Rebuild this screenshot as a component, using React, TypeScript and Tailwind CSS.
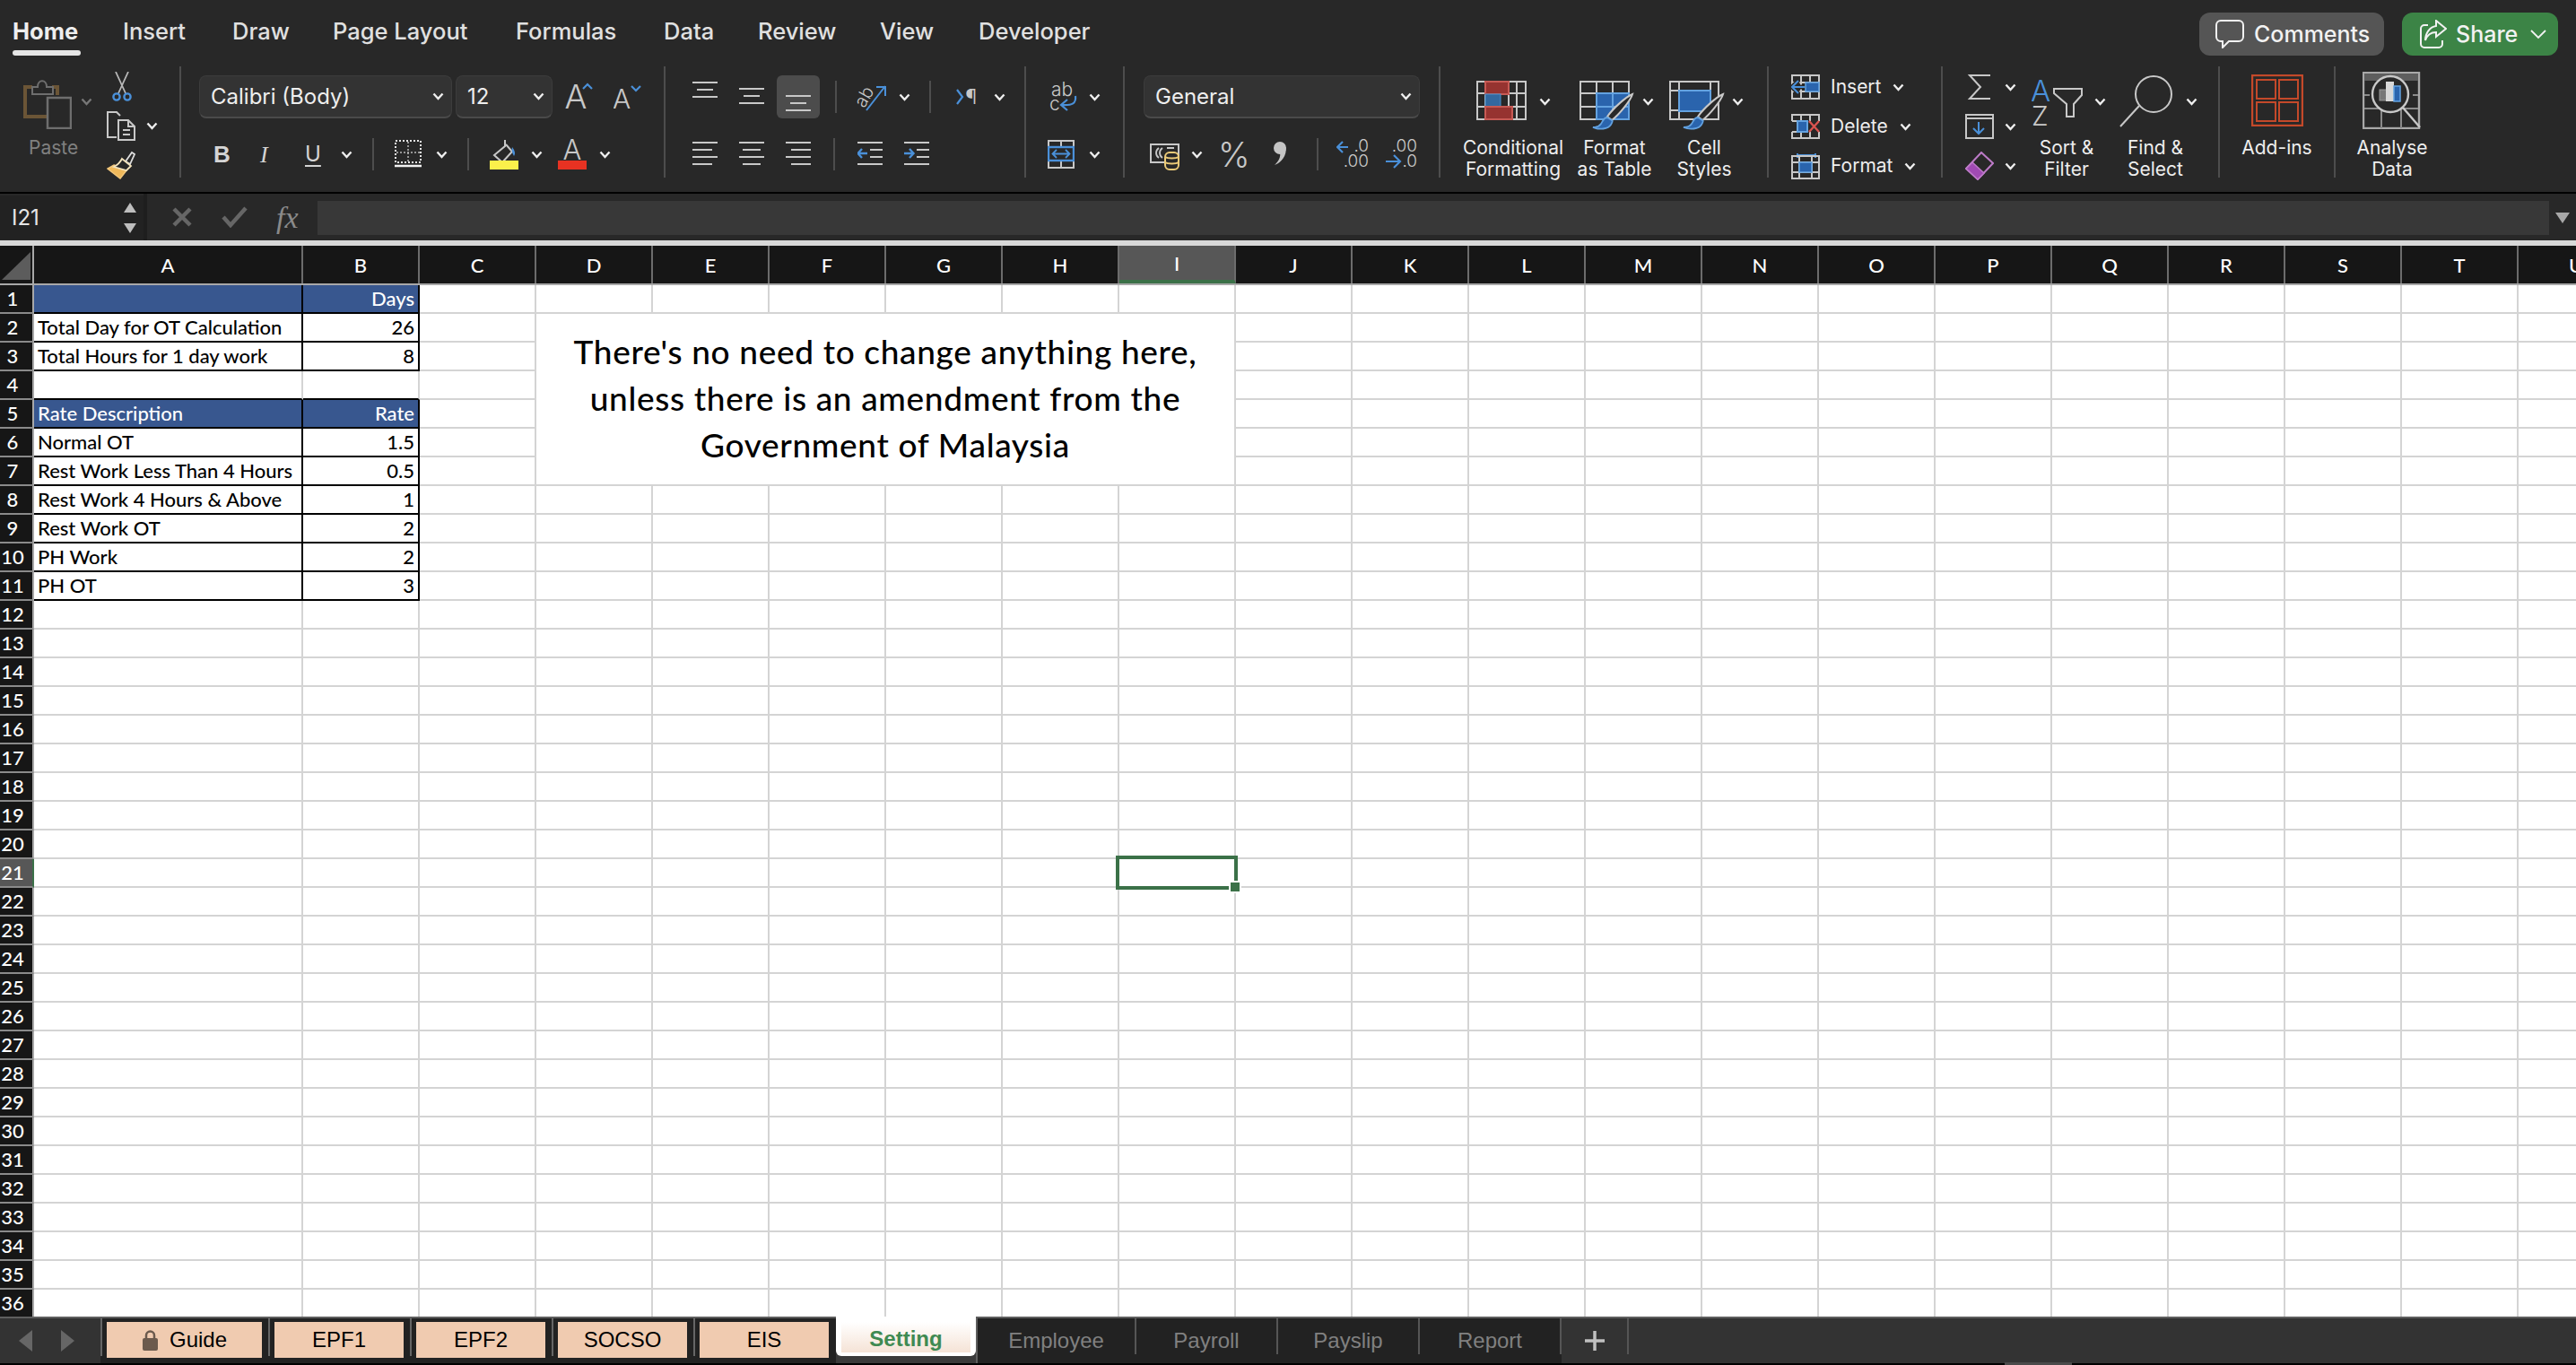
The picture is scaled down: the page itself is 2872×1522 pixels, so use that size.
import React from "react"

const G = "#c8c8c8"
const BL = "#4a90d9"
const BF = "#2a64ad"
const BS = "#63a2e0"
const COLS = ["A", "B", "C", "D", "E", "F", "G", "H", "I", "J", "K", "L", "M", "N", "O", "P", "Q", "R", "S", "T", "U"]
const GRID = "grid grid-cols-[38px_300px_repeat(20,130px)] w-[2938px]"

function Chev({ className = "" }: { className?: string }) {
  return (
    <svg width="13" height="9" viewBox="0 0 13 9" className={"shrink-0 " + className}>
      <polyline points="1.5,1.5 6.5,7 11.5,1.5" fill="none" stroke="#eeeeee" strokeWidth="2.4" />
    </svg>
  )
}

function Sep() {
  return <div className="w-[2px] h-[124px] bg-[#4d4d4d] shrink-0" />
}

function MiniSep({ className = "" }: { className?: string }) {
  return <div className={"w-[2px] h-[36px] bg-[#4d4d4d] shrink-0 " + className} />
}

function Combo({ label, className = "" }: { label: string; className?: string }) {
  return (
    <div className={"h-[48px] flex items-center justify-between bg-[#333333] border border-[#3c3c3c] border-b-2 border-b-[#4a4a4a] rounded-[8px] pl-[12px] pr-[8px] text-[24px] text-[#eeeeee] shrink-0 " + className}>
      <span>{label}</span>
      <Chev />
    </div>
  )
}

function Lines({ rows, className = "", h = 36 }: { rows: number[][]; className?: string; h?: number }) {
  return (
    <svg width="28" height={h} viewBox={`0 0 28 ${h}`} className={"shrink-0 " + className}>
      {rows.map((r, i) => (
        <line key={i} x1={r[0]} x2={r[1]} y1={r[2]} y2={r[2]} stroke={G} strokeWidth="2" />
      ))}
    </svg>
  )
}

function Paste() {
  return (
    <svg width="54" height="60" viewBox="0 0 54 60">
      <path d="M26 46 H2 V13 H10 M32 13 H38 V22" fill="none" stroke="#6b5536" strokeWidth="4" />
      <path d="M10 21 V13 H16 C16 4 26 4 26 13 H33 V21 Z" fill="#282828" stroke="#6e6e6e" strokeWidth="2" />
      <rect x="27" y="25" width="26" height="34" fill="#282828" stroke="#6e6e6e" strokeWidth="2.5" />
    </svg>
  )
}

function Scissors() {
  return (
    <svg width="22" height="34" viewBox="0 0 22 34">
      <path d="M4 0 L15 24 M18 0 L7 24" fill="none" stroke="#b8b8b8" strokeWidth="1.8" />
      <circle cx="5" cy="28" r="3.6" fill="none" stroke={BL} strokeWidth="2.4" />
      <circle cx="17" cy="28" r="3.6" fill="none" stroke={BL} strokeWidth="2.4" />
    </svg>
  )
}

function CopyIcon() {
  return (
    <svg width="32" height="33" viewBox="0 0 32 33">
      <path d="M11 29 H1 V1 H11 L15 5" fill="none" stroke={G} strokeWidth="2" />
      <path d="M13 10 H24 L31 17 V32 H13 Z M24 10 V17 H31" fill="#282828" stroke={G} strokeWidth="2" />
      <path d="M18 21 H26 M18 26 H26" stroke={G} strokeWidth="2" />
    </svg>
  )
}

function FormatPainter() {
  return (
    <svg width="32" height="32" viewBox="0 0 32 32">
      <path d="M21 12 L28 2 L31 4 L26 15 Z" fill="#282828" stroke="#dddddd" strokeWidth="1.8" />
      <path d="M8 16 L22 22 L15 31 L1 20 Z" fill="#f0b95a" stroke="#f3c77b" strokeWidth="1.5" />
      <path d="M17 9 L27 17 L22 22 L8 18 C12 16 15 13 17 9 Z" fill="#282828" stroke="#f3e3bc" strokeWidth="1.8" />
    </svg>
  )
}

function BordersIcon() {
  return (
    <svg width="30" height="32" viewBox="0 0 30 32">
      <rect x="1" y="1" width="28" height="24" fill="none" stroke="#e6e6e6" strokeWidth="2" strokeDasharray="2 2" />
      <path d="M15 2 V25 M2 14 H28" stroke="#bbbbbb" strokeWidth="1.5" strokeDasharray="2 2" />
      <path d="M0 29 H30" stroke="#f2f2f2" strokeWidth="2.5" />
    </svg>
  )
}

function FillIcon() {
  return (
    <svg width="32" height="34" viewBox="0 0 32 34">
      <path d="M17 1 V8 L5 18 L14 26 L25 14 L18 6" fill="none" stroke={G} strokeWidth="2" />
      <path d="M25 9 C28 13 29 16 27 19 C25 16 24 12 25 9 Z" fill={BL} />
      <rect x="0" y="24" width="32" height="10" fill="#fbf04b" />
    </svg>
  )
}

function FontColorIcon() {
  return (
    <svg width="32" height="34" viewBox="0 0 32 34">
      <text x="16" y="23" textAnchor="middle" fontSize="31" fontFamily="Inter" fontWeight="300" fill={G}>A</text>
      <rect x="0" y="24" width="32" height="10" fill="#e73222" />
    </svg>
  )
}

function GrowFont({ small }: { small?: boolean }) {
  return (
    <svg width="34" height="40" viewBox="0 0 34 40" className="shrink-0">
      <text x={small ? 9 : 12} y="33" textAnchor="middle" fontSize={small ? 30 : 37} fontFamily="Inter" fontWeight="300" fill={G}>A</text>
      {small ? (
        <polyline points="20,8 25,13 30,8" fill="none" stroke={BL} strokeWidth="2.2" />
      ) : (
        <polyline points="20,11 25,6 30,11" fill="none" stroke={BL} strokeWidth="2.2" />
      )}
    </svg>
  )
}

function Orientation() {
  return (
    <svg width="34" height="32" viewBox="0 0 34 32" className="shrink-0">
      <text x="2" y="26" fontSize="20" fontFamily="Inter" fontWeight="300" fill={G} transform="rotate(-60 8 22)">ab</text>
      <path d="M11 31 L32 4 M22 5 H32 V15" fill="none" stroke={BL} strokeWidth="2" />
    </svg>
  )
}

function Pilcrow() {
  return (
    <svg width="26" height="22" viewBox="0 0 26 22" className="shrink-0">
      <polyline points="1,3 7,11 1,19" fill="none" stroke={BL} strokeWidth="2.2" />
      <text x="10" y="19" fontSize="23" fontFamily="Inter" fontWeight="300" fill={G}>¶</text>
    </svg>
  )
}

function WrapIcon() {
  return (
    <svg width="32" height="34" viewBox="0 0 32 34" className="shrink-0">
      <text x="2" y="16" fontSize="21" fontFamily="Inter" fill={G} fontWeight="300">ab</text>
      <text x="0" y="32" fontSize="21" fontFamily="Inter" fill={G} fontWeight="300">c</text>
      <path d="M29 16 C30 24 26 27 13 26 M20 20 L13 26 L20 32" fill="none" stroke={BL} strokeWidth="2.2" />
    </svg>
  )
}

function MergeIcon() {
  return (
    <svg width="30" height="32" viewBox="0 0 30 32" className="shrink-0">
      <rect x="1" y="1" width="28" height="30" fill="none" stroke={G} strokeWidth="2" />
      <path d="M15 1 V8 M15 24 V31" stroke={G} strokeWidth="2" />
      <rect x="1" y="8" width="28" height="15" fill="none" stroke={BL} strokeWidth="2.4" />
      <path d="M6 15.5 H24 M10 11 L5.5 15.5 L10 20 M20 11 L24.5 15.5 L20 20" fill="none" stroke={BL} strokeWidth="1.8" />
    </svg>
  )
}

function Accounting() {
  return (
    <svg width="33" height="30" viewBox="0 0 33 30" className="shrink-0">
      <rect x="1" y="1" width="31" height="20" fill="none" stroke={G} strokeWidth="2" />
      <path d="M10 5 C6 8 6 13 10 16 M14 5 C10 8 10 13 14 16 M19 5 H27 M19 16 H23" fill="none" stroke={G} strokeWidth="1.8" />
      <rect x="17" y="10" width="15" height="19" rx="5" fill="#282828" stroke="#eccb78" strokeWidth="2" />
      <path d="M17 15 C20 17 29 17 32 15 M17 21 C20 23 29 23 32 21" fill="none" stroke="#eccb78" strokeWidth="2" />
    </svg>
  )
}

function Comma() {
  return (
    <svg width="18" height="30" viewBox="0 0 18 30" className="shrink-0">
      <circle cx="8" cy="8" r="7" fill="#c4c4c4" />
      <path d="M14.5 7 C16 16 10 24 2 27 C7 22 9 18 8 13 Z" fill="#c4c4c4" />
    </svg>
  )
}

function DecimalIcon({ inc }: { inc?: boolean }) {
  return (
    <svg width="38" height="36" viewBox="0 0 38 36" className="shrink-0">
      {inc ? (
        <>
          <text x="36" y="15" textAnchor="end" fontSize="19" fontFamily="Inter" fontWeight="300" fill={G}>.00</text>
          <text x="36" y="32" textAnchor="end" fontSize="19" fontFamily="Inter" fontWeight="300" fill={G}>.0</text>
          <path d="M1 26 H17 M10 19 L17 26 L10 33" fill="none" stroke={BL} strokeWidth="2.2" />
        </>
      ) : (
        <>
          <text x="36" y="15" textAnchor="end" fontSize="19" fontFamily="Inter" fontWeight="300" fill={G}>.0</text>
          <text x="36" y="32" textAnchor="end" fontSize="19" fontFamily="Inter" fontWeight="300" fill={G}>.00</text>
          <path d="M1 10 H13 M7 4 L1 10 L7 16" fill="none" stroke={BL} strokeWidth="2.2" />
        </>
      )}
    </svg>
  )
}

function CondFormat() {
  return (
    <svg width="56" height="44" viewBox="0 0 56 44" className="shrink-0">
      <rect x="1" y="1" width="54" height="42" fill="none" stroke={G} strokeWidth="2" />
      <path d="M10 1 V43 M36 1 V43 M45 1 V43 M1 14 H55 M1 29 H55" stroke={G} strokeWidth="2" />
      <rect x="10" y="1" width="26" height="14" fill="#963330" stroke="#c75a54" strokeWidth="2" />
      <rect x="10" y="15" width="17" height="14" fill="#33689f" stroke="#4a90c9" strokeWidth="1" />
      <rect x="10" y="29" width="30" height="14" fill="#963330" stroke="#c75a54" strokeWidth="2" />
    </svg>
  )
}

function Brush({ dx = 0 }: { dx?: number }) {
  return (
    <g transform={`translate(${dx} 0)`}>
      <path d="M59 15 C57 22 44 38 36 44 L31 40 C38 30 52 18 59 15 Z" fill="#282828" stroke={G} strokeWidth="2" />
      <path d="M31 41 C27 41 26 45 24 48 C22 51 19 52 15 52 C22 55 32 54 35 49 C37 46 37 44 36 44 Z" fill={BF} stroke={BS} strokeWidth="1.8" />
    </g>
  )
}

function FormatTable() {
  return (
    <svg width="62" height="56" viewBox="0 0 62 56" className="shrink-0">
      <rect x="1" y="1" width="54" height="42" fill="none" stroke={G} strokeWidth="2" />
      <path d="M19 1 V43 M37 1 V14 M1 14 H55 M1 29 H19" stroke={G} strokeWidth="2" />
      <rect x="19" y="14" width="36" height="29" fill={BF} stroke={BS} strokeWidth="2" />
      <path d="M37 14 V43 M19 29 H55" stroke={BS} strokeWidth="2" />
      <Brush />
    </svg>
  )
}

function CellStyles() {
  return (
    <svg width="62" height="56" viewBox="0 0 62 56" className="shrink-0">
      <rect x="1" y="1" width="54" height="42" fill="none" stroke={G} strokeWidth="2" />
      <path d="M11 1 V43 M46 1 V11 M1 11 H11 M1 33 H11" stroke={G} strokeWidth="2" />
      <rect x="11" y="11" width="35" height="23" fill={BF} stroke={BS} strokeWidth="2" />
      <Brush dx={1} />
    </svg>
  )
}

function InsertIcon() {
  return (
    <svg width="32" height="28" viewBox="0 0 32 28" className="shrink-0">
      <rect x="1" y="1" width="30" height="26" fill="none" stroke={G} strokeWidth="2" />
      <path d="M11 1 V27 M21 1 V27 M1 9 H31 M1 19 H31" stroke={G} strokeWidth="2" />
      <rect x="16" y="9" width="15" height="10" fill={BF} stroke={BS} strokeWidth="1.5" />
      <path d="M15 14 H2 M8 7 L1 14 L8 21" fill="none" stroke="#282828" strokeWidth="5" />
      <path d="M15 14 H2 M8 7 L1 14 L8 21" fill="none" stroke={BL} strokeWidth="2" />
    </svg>
  )
}

function DeleteIcon() {
  return (
    <svg width="32" height="28" viewBox="0 0 32 28" className="shrink-0">
      <path d="M1 20 V27 H31 V20 M1 8 V1 H31 V8 M11 1 V8 M21 1 V8 M11 20 V27 M21 20 V27 M1 8 H7 M1 20 H7" fill="none" stroke={G} strokeWidth="2" />
      <rect x="7" y="8" width="11" height="12" fill={BF} stroke={BS} strokeWidth="2" />
      <path d="M20 8 L31 20 M31 8 L20 20" stroke="#d9534f" strokeWidth="2.4" />
    </svg>
  )
}

function FormatCellIcon() {
  return (
    <svg width="32" height="30" viewBox="0 0 32 30" className="shrink-0">
      <path d="M7 1 V6 M27 1 V6 M7 3 H27" fill="none" stroke={BL} strokeWidth="2" />
      <rect x="1" y="4" width="30" height="25" fill="none" stroke={G} strokeWidth="2" />
      <path d="M9 4 V29 M23 4 V29 M1 11 H31 M1 22 H31" stroke={G} strokeWidth="2" />
      <rect x="9" y="11" width="14" height="11" fill={BF} stroke={BS} strokeWidth="1.5" />
    </svg>
  )
}

function SigmaIcon() {
  return (
    <svg width="32" height="28" viewBox="0 0 32 28" className="shrink-0">
      <polyline points="28,1 5,1 17,14 5,27 28,27" fill="none" stroke={G} strokeWidth="2" />
    </svg>
  )
}

function FillDown() {
  return (
    <svg width="32" height="28" viewBox="0 0 32 28" className="shrink-0">
      <rect x="1" y="1" width="30" height="26" fill="none" stroke={G} strokeWidth="2" />
      <path d="M1 5 H31" stroke={G} strokeWidth="2" />
      <path d="M15 9 V22 M9 16 L15 22 L21 16" fill="none" stroke={BL} strokeWidth="2" />
    </svg>
  )
}

function Eraser() {
  return (
    <svg width="32" height="32" viewBox="0 0 32 32" className="shrink-0">
      <path d="M1 19 L18 1 L31 13 L14 31 Z" fill="none" stroke="#bd7bc8" strokeWidth="2" />
      <path d="M1 19 L8 12 L21 24 L14 31 Z" fill="#a04ab3" stroke="#bd7bc8" strokeWidth="1.5" />
    </svg>
  )
}

function SortIcon() {
  return (
    <svg width="58" height="56" viewBox="0 0 58 56" className="shrink-0">
      <text x="-1" y="29" fontSize="33" fontFamily="Inter" fontWeight="300" fill={BL}>A</text>
      <text x="0" y="56" fontSize="30" fontFamily="Inter" fontWeight="300" fill={G}>Z</text>
      <path d="M25 15 H56 V22 L47 32 V46 H39 V32 L25 20 Z" fill="none" stroke={G} strokeWidth="2" />
    </svg>
  )
}

function FindIcon() {
  return (
    <svg width="60" height="60" viewBox="0 0 60 60" className="shrink-0">
      <circle cx="38" cy="21" r="20" fill="none" stroke={G} strokeWidth="2" />
      <path d="M22 34 L1 57" stroke={G} strokeWidth="2" />
    </svg>
  )
}

function AddIns() {
  return (
    <svg width="58" height="58" viewBox="0 0 58 58" className="shrink-0">
      <rect x="1" y="1" width="56" height="56" fill="none" stroke="#c4492a" strokeWidth="2.4" />
      <rect x="6" y="6" width="21" height="21" fill="none" stroke="#c4492a" strokeWidth="2" />
      <rect x="31" y="6" width="21" height="21" fill="none" stroke="#c4492a" strokeWidth="2" />
      <rect x="6" y="31" width="21" height="21" fill="none" stroke="#c4492a" strokeWidth="2" />
      <rect x="31" y="31" width="21" height="21" fill="none" stroke="#c4492a" strokeWidth="2" />
    </svg>
  )
}

function Analyse() {
  return (
    <svg width="66" height="64" viewBox="0 0 66 64" className="shrink-0">
      <rect x="1" y="1" width="62" height="62" fill="none" stroke="#a8a8a8" strokeWidth="2.4" />
      <rect x="2" y="2" width="60" height="8" fill="#5e5e5e" />
      <path d="M2 26 H8 M56 26 H62 M2 41 H62 M21 41 V63 M43 41 V63" stroke="#8a8a8a" strokeWidth="2" />
      <circle cx="31" cy="25" r="20" fill="#282828" stroke="#c8c8c8" strokeWidth="2.4" />
      <rect x="19" y="20" width="8" height="12" fill="#777777" stroke="#999999" strokeWidth="1" />
      <rect x="26" y="11" width="9" height="22" fill="#d8d8d8" />
      <rect x="35" y="16" width="7" height="17" fill={BF} stroke={BS} strokeWidth="1.5" />
      <path d="M45 40 L64 62" stroke="#c8c8c8" strokeWidth="2.4" />
    </svg>
  )
}

function Label({ children, className = "" }: { children: React.ReactNode; className?: string }) {
  return <div className={"text-[21px] leading-[24px] text-[#eeeeee] text-center whitespace-pre " + className}>{children}</div>
}

function Ribbon() {
  return (
    <div className="flex h-[152px] pt-[12px] items-start">
      <div className="w-[200px] h-[124px] flex items-start shrink-0">
        <div className="ml-[26px] mt-[10px] w-[61px] flex flex-col">
          <Paste />
          <div className="text-[21px] leading-[24px] mt-[9px] pl-[6px] text-[#808080] text-center">Paste</div>
        </div>
        <Chev className="ml-[3px] mt-[35px] opacity-40" />
        <div className="ml-[16px] w-[60px] flex flex-col">
          <div className="h-[44px] pt-[6px] pl-[6px]"><Scissors /></div>
          <div className="h-[44px] flex items-center">
            <CopyIcon />
            <Chev className="ml-[12px]" />
          </div>
          <div className="h-[36px] pt-[6px]"><FormatPainter /></div>
        </div>
      </div>
      <Sep />

      <div className="w-[538px] h-[124px] pt-[10px] shrink-0">
        <div className="flex items-center h-[48px]">
          <Combo label="Calibri (Body)" className="ml-[20px] w-[282px]" />
          <Combo label="12" className="ml-[4px] w-[108px]" />
          <div className="ml-[14px]"><GrowFont /></div>
          <div className="ml-[20px]"><GrowFont small /></div>
        </div>
        <div className="flex items-center h-[36px] mt-[22px] text-[26px] text-[#d4d4d4]">
          <span className="ml-[36px] w-[16px] font-bold font-['Liberation_Sans',sans-serif]">B</span>
          <span className="ml-[36px] w-[16px] italic font-['Liberation_Serif',serif]">I</span>
          <span className="ml-[34px] w-[18px] underline underline-offset-[4px] text-[24px]">U</span>
          <Chev className="ml-[22px]" />
          <MiniSep className="ml-[22px]" />
          <div className="ml-[23px] flex"><BordersIcon /></div>
          <Chev className="ml-[16px]" />
          <MiniSep className="ml-[22px]" />
          <div className="ml-[23px] flex"><FillIcon /></div>
          <Chev className="ml-[14px]" />
          <div className="ml-[17px] flex"><FontColorIcon /></div>
          <Chev className="ml-[14px]" />
        </div>
      </div>
      <Sep />

      <div className="w-[400px] h-[124px] pt-[10px] shrink-0">
        <div className="flex items-center h-[48px]">
          <Lines className="ml-[30px]" h={48} rows={[[0, 28, 8], [5, 23, 16], [0, 28, 24]]} />
          <Lines className="ml-[24px]" h={48} rows={[[0, 28, 15], [5, 23, 23], [0, 28, 31]]} />
          <div className="ml-[14px] w-[48px] h-[48px] bg-[#4c4c4c] rounded-[6px] flex justify-center shrink-0">
            <Lines h={48} rows={[[0, 28, 23], [5, 23, 31], [0, 28, 39]]} />
          </div>
          <MiniSep className="ml-[17px]" />
          <div className="ml-[22px]"><Orientation /></div>
          <Chev className="ml-[13px]" />
          <MiniSep className="ml-[21px]" />
          <div className="ml-[28px]"><Pilcrow /></div>
          <Chev className="ml-[16px]" />
        </div>
        <div className="flex items-center h-[36px] mt-[22px]">
          <Lines className="ml-[30px]" rows={[[0, 28, 5], [0, 22, 13], [0, 28, 21], [0, 22, 29]]} />
          <Lines className="ml-[24px]" rows={[[0, 28, 5], [4, 24, 13], [0, 28, 21], [4, 24, 29]]} />
          <Lines className="ml-[24px]" rows={[[0, 28, 5], [6, 28, 13], [0, 28, 21], [6, 28, 29]]} />
          <MiniSep className="ml-[25px]" />
          <svg width="28" height="36" viewBox="0 0 28 36" className="ml-[25px] shrink-0">
            <path d="M0 5 H28 M14 13 H28 M14 21 H28 M0 29 H28" stroke={G} strokeWidth="2" />
            <path d="M11 17 H1 M5 12 L0.5 17 L5 22" fill="none" stroke={BL} strokeWidth="2.4" />
          </svg>
          <svg width="28" height="36" viewBox="0 0 28 36" className="ml-[24px] shrink-0">
            <path d="M0 5 H28 M14 13 H28 M14 21 H28 M0 29 H28" stroke={G} strokeWidth="2" />
            <path d="M0 17 H10 M6 12 L10.5 17 L6 22" fill="none" stroke={BL} strokeWidth="2.4" />
          </svg>
        </div>
      </div>
      <Sep />

      <div className="w-[108px] h-[124px] pt-[10px] shrink-0">
        <div className="flex items-center h-[48px]">
          <div className="ml-[26px]"><WrapIcon /></div>
          <Chev className="ml-[12px]" />
        </div>
        <div className="flex items-center h-[36px] mt-[22px]">
          <div className="ml-[24px]"><MergeIcon /></div>
          <Chev className="ml-[16px]" />
        </div>
      </div>
      <Sep />

      <div className="w-[350px] h-[124px] pt-[10px] shrink-0">
        <Combo label="General" className="ml-[21px] w-[308px]" />
        <div className="flex items-center h-[36px] mt-[22px]">
          <div className="ml-[28px] mt-[6px]"><Accounting /></div>
          <Chev className="ml-[13px]" />
          <span className="ml-[17px] w-[33px] text-[38px] font-light text-[#c8c8c8]">%</span>
          <div className="ml-[28px]"><Comma /></div>
          <MiniSep className="ml-[31px]" />
          <div className="ml-[20px]"><DecimalIcon /></div>
          <div className="ml-[16px]"><DecimalIcon inc /></div>
        </div>
      </div>
      <Sep />

      <div className="w-[364px] h-[124px] flex shrink-0">
        <div className="ml-[21px] w-[120px] shrink-0">
          <div className="h-[79px] pt-[16px] pl-[19px] flex items-start">
            <CondFormat />
            <Chev className="ml-[14px] mt-[19px]" />
          </div>
          <Label>{"Conditional\nFormatting"}</Label>
        </div>
        <div className="ml-[8px] w-[90px] shrink-0">
          <div className="h-[79px] pt-[16px] pl-[6px] flex items-start">
            <FormatTable />
            <Chev className="ml-[8px] mt-[19px]" />
          </div>
          <Label>{"Format\nas Table"}</Label>
        </div>
        <div className="ml-[8px] w-[94px] shrink-0">
          <div className="h-[79px] pt-[16px] pl-[8px] flex items-start">
            <CellStyles />
            <Chev className="ml-[8px] mt-[19px]" />
          </div>
          <Label>{"Cell\nStyles"}</Label>
        </div>
      </div>
      <Sep />

      <div className="w-[192px] h-[124px] pt-[1px] text-[21px] text-[#eeeeee] shrink-0">
        <div className="h-[44px] flex items-center pl-[25px]">
          <InsertIcon />
          <span className="ml-[12px]">Insert</span>
          <Chev className="ml-[13px]" />
        </div>
        <div className="h-[44px] flex items-center pl-[25px]">
          <DeleteIcon />
          <span className="ml-[12px]">Delete</span>
          <Chev className="ml-[13px]" />
        </div>
        <div className="h-[44px] flex items-center pl-[25px]">
          <FormatCellIcon />
          <span className="ml-[12px]">Format</span>
          <Chev className="ml-[13px]" />
        </div>
      </div>
      <Sep />

      <div className="w-[307px] h-[124px] flex shrink-0">
        <div className="ml-[25px] w-[56px] pt-[1px] shrink-0">
          <div className="h-[44px] flex items-center"><SigmaIcon /><Chev className="ml-[12px]" /></div>
          <div className="h-[44px] flex items-center"><FillDown /><Chev className="ml-[12px]" /></div>
          <div className="h-[44px] flex items-center"><Eraser /><Chev className="ml-[12px]" /></div>
        </div>
        <div className="ml-[12px] w-[90px] shrink-0">
          <div className="h-[79px] pt-[10px] pl-[6px] flex items-start">
            <SortIcon />
            <Chev className="ml-[12px] mt-[25px]" />
          </div>
          <Label>{"Sort &\nFilter"}</Label>
        </div>
        <div className="ml-[6px] w-[96px] shrink-0">
          <div className="h-[79px] pt-[10px] pl-[8px] flex items-start">
            <FindIcon />
            <Chev className="ml-[14px] mt-[25px]" />
          </div>
          <Label>{"Find &\nSelect"}</Label>
        </div>
      </div>
      <Sep />

      <div className="w-[127px] h-[124px] shrink-0">
        <div className="h-[79px] pt-[9px] flex justify-center"><AddIns /></div>
        <Label>Add-ins</Label>
      </div>
      <Sep />

      <div className="w-[126px] h-[124px] shrink-0">
        <div className="h-[79px] pt-[6px] flex justify-center"><Analyse /></div>
        <Label>{"Analyse\nData"}</Label>
      </div>
    </div>
  )
}

function TitleTabs() {
  return (
    <div className="flex h-[62px] items-start text-[25.5px] leading-[30px] text-[#e0e0e0] font-medium">
      <div className="ml-[14px] w-[76px] pt-[20px] font-bold text-[#eeeeee] whitespace-nowrap">
        Home
        <div className="mt-[6px] h-[6px] rounded-full bg-[#e6e6e6]" />
      </div>
      <div className="ml-[47px] w-[70px] pt-[20px] whitespace-nowrap">Insert</div>
      <div className="ml-[52px] w-[62px] pt-[20px] whitespace-nowrap">Draw</div>
      <div className="ml-[50px] w-[151px] pt-[20px] whitespace-nowrap">Page Layout</div>
      <div className="ml-[53px] w-[114px] pt-[20px] whitespace-nowrap">Formulas</div>
      <div className="ml-[51px] w-[57px] pt-[20px] whitespace-nowrap">Data</div>
      <div className="ml-[48px] w-[88px] pt-[20px] whitespace-nowrap">Review</div>
      <div className="ml-[48px] w-[59px] pt-[20px] whitespace-nowrap">View</div>
      <div className="ml-[51px] w-[125px] pt-[20px] whitespace-nowrap">Developer</div>

      <div className="ml-auto mt-[14px] h-[48px] w-[206px] rounded-[12px] bg-[#555555] flex items-center pl-[18px] text-[25px] text-[#f2f2f2]">
        <svg width="32" height="32" viewBox="0 0 32 32" className="shrink-0">
          <path d="M6 1 H26 A5 5 0 0 1 31 6 V19 A5 5 0 0 1 26 24 H15 L8 31 V24 H6 A5 5 0 0 1 1 19 V6 A5 5 0 0 1 6 1 Z" fill="none" stroke="#f2f2f2" strokeWidth="2" />
        </svg>
        <span className="ml-[11px]">Comments</span>
      </div>
      <div className="ml-[20px] mr-[20px] mt-[14px] h-[48px] w-[174px] rounded-[12px] bg-[#3c8446] flex items-center pl-[20px] text-[25px] text-[#f2f2f2]">
        <svg width="30" height="32" viewBox="0 0 30 32" className="shrink-0">
          <path d="M9 6 H5 A4 4 0 0 0 1 10 V27 A4 4 0 0 0 5 31 H21 A4 4 0 0 0 25 27 V23" fill="none" stroke="#f2f2f2" strokeWidth="2" />
          <path d="M18 1 L29 10 L18 19 V14 C12 14 8 17 6 23 C6 15 11 8 18 7 Z" fill="none" stroke="#f2f2f2" strokeWidth="2" />
        </svg>
        <span className="ml-[10px]">Share</span>
        <svg width="18" height="11" viewBox="0 0 18 11" className="ml-[14px] shrink-0">
          <polyline points="1,1 9,9 17,1" fill="none" stroke="#f2f2f2" strokeWidth="1.8" />
        </svg>
      </div>
    </div>
  )
}

function FormulaBar() {
  return (
    <div className="flex h-[52px] bg-[#282828]">
      <div className="mt-[2px] w-[160px] h-[49px] bg-[#222222] flex items-center pl-[13px] text-[24px] text-[#e6e6e6] justify-between pr-[8px] shrink-0">
        <span>I21</span>
        <svg width="14" height="36" viewBox="0 0 14 36">
          <path d="M7 1 L14 12 H0 Z M0 24 H14 L7 35 Z" fill="#bdbdbd" />
        </svg>
      </div>
      <div className="w-[4px] bg-[#1e1e1e] shrink-0" />
      <div className="w-[190px] flex items-center shrink-0">
        <svg width="22" height="22" viewBox="0 0 22 22" className="ml-[28px] shrink-0">
          <path d="M2 2 L20 20 M20 2 L2 20" stroke="#666666" strokeWidth="4.5" />
        </svg>
        <svg width="30" height="24" viewBox="0 0 30 24" className="ml-[33px] shrink-0">
          <path d="M2 12 L10 21 L27 2" fill="none" stroke="#666666" strokeWidth="4.5" />
        </svg>
        <span className="ml-[31px] font-['Liberation_Serif',serif] italic text-[34px] text-[#8a8a8a]">fx</span>
      </div>
      <div className="mt-[8px] h-[38px] w-[2488px] bg-[#383838] shrink-0" />
      <svg width="16" height="12" viewBox="0 0 16 12" className="ml-[7px] mt-[21px] shrink-0">
        <path d="M0 0 H16 L8 12 Z" fill="#a8a8a8" />
      </svg>
    </div>
  )
}

function ColumnHeaders() {
  return (
    <div className={GRID + " h-[44px] bg-[#161616] border-b-2 border-[#a8a8a8]"}>
      <div className="h-[42px] border-r-2 border-[#a8a8a8] flex items-end pb-[4px] pl-[2px]">
        <svg width="32" height="31" viewBox="0 0 32 31">
          <path d="M32 0 V31 H0 Z" fill="#5c5c5c" />
        </svg>
      </div>
      {COLS.map((c) => (
        <div
          key={c}
          className={
            c === "I"
              ? "h-[42px] flex items-center justify-center bg-[#575757] border-b-4 border-[#3b7148] text-white border-r-2 border-r-[#6c6c6c]"
              : "h-[42px] flex items-center justify-center border-r-2 border-[#6c6c6c] text-white"
          }
        >
          {c}
        </div>
      ))}
    </div>
  )
}

const TABLE: Record<number, [string, string]> = {
  1: ["", "Days"],
  2: ["Total Day for OT Calculation", "26"],
  3: ["Total Hours for 1 day work", "8"],
  5: ["Rate Description", "Rate"],
  6: ["Normal OT", "1.5"],
  7: ["Rest Work Less Than 4 Hours", "0.5"],
  8: ["Rest Work 4 Hours & Above", "1"],
  9: ["Rest Work OT", "2"],
  10: ["PH Work", "2"],
  11: ["PH OT", "3"],
}

function Sheet() {
  const rows = Array.from({ length: 36 }, (_, i) => i + 1)
  return (
    <div className="relative h-[1150px] overflow-hidden bg-white">
      <div className={GRID + " auto-rows-[32px]"}>
        <div className="col-start-5 col-end-11 row-start-2 row-end-8 flex items-center justify-center text-center bg-white border-r-2 border-b-2 border-[#d4d4d4] pb-[2px] text-[37px] leading-[52px] text-black whitespace-pre tracking-[0.018em]">
          {"There's no need to change anything here,\nunless there is an amendment from the\nGovernment of Malaysia"}
        </div>
        {rows.map((r) => (
          <React.Fragment key={r}>
            <div
              className={
                r === 21
                  ? "bg-[#575757] text-white border-r-2 border-[#3b7148] border-b-2 border-b-[#8a8a8a] pr-[8px] text-center"
                  : "bg-[#161616] text-white border-r-2 border-r-[#a8a8a8] border-b-2 border-b-[#8a8a8a] pr-[8px] text-center"
              }
            >
              <div className="leading-[30px]">{r}</div>
            </div>
            {COLS.map((c, ci) => {
              if (r >= 2 && r <= 7 && ci >= 3 && ci <= 8) return null
              const data = TABLE[r]
              const blackBottom = r === 4 && ci < 2
              if (data && ci < 2) {
                const head = r === 1 || r === 5
                return (
                  <div
                    key={c}
                    className={
                      (head ? "bg-[#38578f] text-white " : "bg-white text-black ") +
                      (ci === 0 ? "pl-[4px] " : "pr-[4px] text-right ") +
                      "border-r-2 border-b-2 border-black leading-[30px] whitespace-nowrap overflow-hidden"
                    }
                  >
                    {data[ci]}
                  </div>
                )
              }
              return (
                <div
                  key={c}
                  className={
                    blackBottom
                      ? "border-r-2 border-r-[#d4d4d4] border-b-2 border-b-black"
                      : "border-r-2 border-b-2 border-[#d4d4d4]"
                  }
                />
              )
            })}
          </React.Fragment>
        ))}
      </div>
      <div className="absolute left-[1244px] top-[636px] w-[136px] h-[38px] border-4 border-[#3b7148]">
        <div className="absolute -right-[6px] -bottom-[6px] w-[10px] h-[10px] bg-[#3b7148] ring-2 ring-white" />
      </div>
    </div>
  )
}

function SheetTab({ label, className = "", lock }: { label: string; className?: string; lock?: boolean }) {
  return (
    <div className={"h-[42px] border-l-2 border-[#666666] pt-[4px] pl-[5px] shrink-0 " + className}>
      <div className="h-[40px] w-full bg-[#f0cbb0] flex items-center justify-center text-black">
        {lock && (
          <svg width="19" height="23" viewBox="0 0 19 23" className="mr-[12px] shrink-0">
            <path d="M5 10 V6 A4.5 4.5 0 0 1 14 6 V10" fill="none" stroke="#6b5a4d" strokeWidth="2.5" />
            <rect x="1" y="9" width="17" height="14" rx="2" fill="#6b5a4d" />
          </svg>
        )}
        {label}
      </div>
    </div>
  )
}

function DimTab({ label, className = "" }: { label: string; className?: string }) {
  return (
    <div className={"h-[40px] pt-[9px] border-r-2 border-[#555555] flex items-center justify-center text-[#808080] shrink-0 " + className}>
      {label}
    </div>
  )
}

function TabBar() {
  return (
    <div className="relative flex h-[52px] font-['Liberation_Sans',sans-serif] text-[24px]">
      <div className="w-[112px] bg-[#333333] border-t-2 border-[#5e5e5e] flex items-center shrink-0">
        <svg width="15" height="24" viewBox="0 0 15 24" className="ml-[21px]"><path d="M15 0 V24 L0 12 Z" fill="#666666" /></svg>
        <svg width="15" height="24" viewBox="0 0 15 24" className="ml-[32px]"><path d="M0 0 V24 L15 12 Z" fill="#666666" /></svg>
      </div>
      <div className="w-[820px] bg-[#222222] border-t-2 border-[#5e5e5e] flex shrink-0">
        <SheetTab label="Guide" lock className="w-[187px] pr-[7px]" />
        <SheetTab label="EPF1" className="w-[158px] pr-[7px]" />
        <SheetTab label="EPF2" className="w-[158px] pr-[7px]" />
        <SheetTab label="SOCSO" className="w-[158px] pr-[7px]" />
        <SheetTab label="EIS" className="w-[159px] pr-[8px]" />
      </div>
      <div className="w-[156px] bg-[#3a3a3a] shrink-0">
        <div className="h-[44px] bg-white rounded-b-[6px] pt-[6px] px-[6px]">
          <div className="h-[34px] pt-[4px] bg-gradient-to-b from-white to-[#f5e3d6] flex items-center justify-center font-bold text-[#3f8a52]">Setting</div>
        </div>
      </div>
      <div className="w-[653px] bg-[#222222] border-t-2 border-l-2 border-[#5e5e5e] flex shrink-0">
        <DimTab label="Employee" className="w-[177px]" />
        <DimTab label="Payroll" className="w-[158px]" />
        <DimTab label="Payslip" className="w-[158px]" />
        <DimTab label="Report" className="w-[158px]" />
      </div>
      <div className="flex-1 bg-[#333333] border-t-2 border-[#5e5e5e] flex">
        <div className="w-[75px] h-[40px] pt-[9px] border-r-2 border-[#555555] flex items-center justify-center">
          <svg width="22" height="22" viewBox="0 0 22 22"><path d="M11 0 V22 M0 11 H22" stroke="#c0c0c0" strokeWidth="3.5" /></svg>
        </div>
      </div>
    </div>
  )
}

export default function App() {
  return (
    <div className="relative w-[2872px] h-[1522px] overflow-hidden flex flex-col bg-[#282828] font-['Inter',sans-serif]">
      <div className="h-[214px] bg-[#282828] shrink-0">
        <TitleTabs />
        <Ribbon />
      </div>
      <div className="h-[2px] bg-black shrink-0" />
      <FormulaBar />
      <div className="h-[6px] bg-[#d8d8d8] shrink-0" />
      <div className="font-['Lato',sans-serif] text-[22px] font-medium shrink-0">
        <ColumnHeaders />
        <Sheet />
      </div>
      <TabBar />
      <div className="h-[2px] bg-black shrink-0" />
      <div className="absolute left-[2235px] bottom-0 w-[75px] h-[3px] bg-[#4a4a4a]" />
    </div>
  )
}
